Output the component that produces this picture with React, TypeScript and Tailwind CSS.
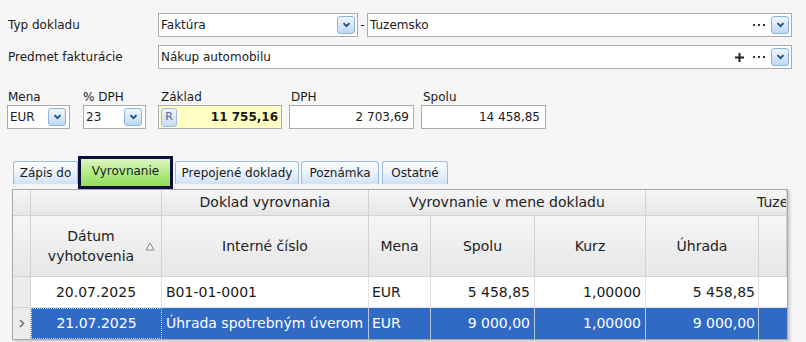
import React from "react";

const Chevron = () => (
  <svg width="9" height="6" viewBox="0 0 9 6">
    <path d="M1.5 1.2 L4.5 4.2 L7.5 1.2" fill="none" stroke="#1f4e8c" strokeWidth="1.9" />
  </svg>
);

function DropBtn() {
  return (
    <div className="w-[18px] h-[18px] shrink-0 rounded-[3px] border border-[#8db4e0] bg-gradient-to-b from-[#f2f7fd] to-[#bfd9f5] flex items-center justify-center">
      <Chevron />
    </div>
  );
}

function Dots() {
  return (
    <div className="flex items-center gap-[3px] mr-[6px]">
      <div className="w-[2px] h-[2px] bg-[#333]" />
      <div className="w-[2px] h-[2px] bg-[#333]" />
      <div className="w-[2px] h-[2px] bg-[#333]" />
    </div>
  );
}

function Plus() {
  return (
    <svg width="9" height="9" viewBox="0 0 9 9" className="mr-[9px]">
      <path d="M0 4.5 H9 M4.5 0 V9" stroke="#222" strokeWidth="2" />
    </svg>
  );
}

function Tab({ label, w }: { label: string; w: string }) {
  return (
    <div
      className={`${w} h-[23px] shrink-0 rounded-t-[3px] border border-b-0 border-[#9dbbe0] bg-gradient-to-b from-[#fbfdff] via-[#eaf2fc] to-[#cfe1f6] flex items-center justify-center text-[12px] text-[#1a1a1a]`}
    >
      {label}
    </div>
  );
}

const hdr =
  "border-r border-b border-[#d2d2d2] bg-gradient-to-b from-[#f6f6f6] to-[#e6e6e6] flex items-center justify-center text-[#222]";

export default function App() {
  return (
    <div className="w-[806px] h-[342px] overflow-hidden bg-[#f6f6f6] font-['DejaVu_Sans',sans-serif] text-[12px] text-[#1a1a1a]">
      {/* Typ dokladu */}
      <div className="flex items-center h-6 mt-[13px] pl-2 pr-[14px]">
        <div className="w-[150px] shrink-0">Typ dokladu</div>
        <div className="w-[200px] h-6 shrink-0 border border-[#ababab] bg-white flex items-center pl-[2px] pr-[2px]">
          <span className="flex-1">Faktúra</span>
          <DropBtn />
        </div>
        <span className="w-[9px] text-center">-</span>
        <div className="flex-1 h-6 border border-[#ababab] bg-white flex items-center pl-[2px] pr-[2px]">
          <span className="flex-1">Tuzemsko</span>
          <Dots />
          <DropBtn />
        </div>
      </div>

      {/* Predmet */}
      <div className="flex items-center h-6 mt-2 pl-2 pr-[14px]">
        <div className="w-[150px] shrink-0">Predmet fakturácie</div>
        <div className="flex-1 h-6 border border-[#ababab] bg-white flex items-center pl-[2px] pr-[2px]">
          <span className="flex-1">Nákup automobilu</span>
          <Plus />
          <Dots />
          <DropBtn />
        </div>
      </div>

      {/* amounts */}
      <div className="flex items-end mt-[21px] pl-[7px]">
        <div className="flex flex-col w-[63px]">
          <span className="pl-px h-[15px] leading-[15px]">Mena</span>
          <div className="h-6 border border-[#ababab] bg-white flex items-center pl-[2px] pr-[3px]">
            <span className="flex-1">EUR</span>
            <DropBtn />
          </div>
        </div>
        <div className="flex flex-col w-[63px] ml-[13px]">
          <span className="h-[15px] leading-[15px]">% DPH</span>
          <div className="h-6 border border-[#ababab] bg-white flex items-center pl-[2px] pr-[3px]">
            <span className="flex-1">23</span>
            <DropBtn />
          </div>
        </div>
        <div className="flex flex-col w-[124px] ml-[12px]">
          <span className="pl-[3px] h-[15px] leading-[15px]">Základ</span>
          <div className="h-6 border border-[#ababab] bg-[#ffffc4] flex items-center pl-[2px] pr-[3px]">
            <div className="w-4 h-[19px] rounded-[3px] border border-[#9ebce0] bg-gradient-to-b from-[#eef5fd] to-[#c8dcf4] flex items-center justify-center text-[11px] text-[#3c6aa8]">
              R
            </div>
            <span className="flex-1 text-right font-bold">11 755,16</span>
          </div>
        </div>
        <div className="flex flex-col w-[125px] ml-[7px]">
          <span className="pl-[2px] h-[15px] leading-[15px]">DPH</span>
          <div className="h-6 border border-[#ababab] bg-white flex items-center justify-end pr-[4px]">
            2 703,69
          </div>
        </div>
        <div className="flex flex-col w-[125px] ml-[7px]">
          <span className="pl-[2px] h-[15px] leading-[15px]">Spolu</span>
          <div className="h-6 border border-[#ababab] bg-white flex items-center justify-end pr-[5px]">
            14 458,85
          </div>
        </div>
      </div>

      {/* tabs */}
      <div className="flex items-center h-[33px] mt-[27px] pl-[13px]">
        <Tab label="Zápis do" w="w-[65px]" />
        <div className="w-[95px] h-[33px] shrink-0 border-[3px] border-[#0d0d3e]">
          <div className="h-full bg-gradient-to-b from-[#dff6c4] via-[#b4ec86] to-[#8edc5c] flex items-center justify-center text-[12px] text-[#1a1a1a] pb-[3px]">
            Vyrovnanie
          </div>
        </div>
        <div className="w-[2px]" />
        <Tab label="Prepojené doklady" w="w-[124px]" />
        <div className="w-[2px]" />
        <Tab label="Poznámka" w="w-[78px]" />
        <div className="w-[3px]" />
        <Tab label="Ostatné" w="w-[66px]" />
      </div>

      {/* grid */}
      <div className="ml-[12px] w-[776px] border border-[#a9a9a9] bg-white shadow-[2px_2px_3px_rgba(0,0,0,0.18)] text-[14px]">
        <div className="grid grid-cols-[18px_131px_207px_62px_104px_111px_113px_28px]">
          {/* header row 1 */}
          <div className={`${hdr} h-[26px]`} />
          <div className={`${hdr} h-[26px]`} />
          <div className={`${hdr} h-[26px]`}>Doklad vyrovnania</div>
          <div className={`${hdr} h-[26px] col-span-3`}>Vyrovnanie v mene dokladu</div>
          <div className={`${hdr} h-[26px] col-span-2 !justify-start pl-[111px] whitespace-nowrap overflow-hidden`}>
            Tuzemsko
          </div>

          {/* header row 2 */}
          <div className={`${hdr} h-[61px]`} />
          <div className={`${hdr} h-[61px] !justify-between pl-[6px] pr-[6px]`}>
            <span className="flex-1 text-center leading-[20px]">
              Dátum
              <br />
              vyhotovenia
            </span>
            <svg width="10" height="9" viewBox="0 0 10 9" className="mt-[1px]">
              <path d="M5 1 L9 8 H1 Z" fill="none" stroke="#8a8a8a" strokeWidth="1" />
            </svg>
          </div>
          <div className={`${hdr} h-[61px]`}>Interné číslo</div>
          <div className={`${hdr} h-[61px]`}>Mena</div>
          <div className={`${hdr} h-[61px]`}>Spolu</div>
          <div className={`${hdr} h-[61px]`}>Kurz</div>
          <div className={`${hdr} h-[61px]`}>Úhrada</div>
          <div className={`${hdr} h-[61px]`} />

          {/* row 1 */}
          <div className="h-[31px] border-r border-b border-[#d2d2d2] bg-[#ececec]" />
          <div className="h-[31px] border-r border-b border-[#e0e0e0] flex items-center justify-center">20.07.2025</div>
          <div className="h-[31px] border-r border-b border-[#e0e0e0] flex items-center pl-[4px]">B01-01-0001</div>
          <div className="h-[31px] border-r border-b border-[#e0e0e0] flex items-center pl-[3px]">EUR</div>
          <div className="h-[31px] border-r border-b border-[#e0e0e0] flex items-center justify-end pr-[4px]">5 458,85</div>
          <div className="h-[31px] border-r border-b border-[#e0e0e0] flex items-center justify-end pr-[4px]">1,00000</div>
          <div className="h-[31px] border-r border-b border-[#e0e0e0] flex items-center justify-end pr-[3px]">5 458,85</div>
          <div className="h-[31px] border-b border-[#e0e0e0]" />

          {/* row 2 selected */}
          <div className="h-[31px] border-r border-[#d2d2d2] bg-[#ececec] flex items-center justify-center">
            <svg width="6" height="9" viewBox="0 0 6 9">
              <path d="M1 1 L4.5 4.5 L1 8" fill="none" stroke="#707070" strokeWidth="1.6" />
            </svg>
          </div>
          <div className="h-[31px] bg-[#316ac5] border border-dotted border-[#c9d6ee] text-white flex items-center justify-center">
            21.07.2025
          </div>
          <div className="h-[31px] bg-[#316ac5] border-r border-[#b8c9e8] text-white flex items-center pl-[4px] whitespace-nowrap">
            Úhrada spotrebným úverom
          </div>
          <div className="h-[31px] bg-[#316ac5] border-r border-[#b8c9e8] text-white flex items-center pl-[3px]">EUR</div>
          <div className="h-[31px] bg-[#316ac5] border-r border-[#b8c9e8] text-white flex items-center justify-end pr-[4px]">9 000,00</div>
          <div className="h-[31px] bg-[#316ac5] border-r border-[#b8c9e8] text-white flex items-center justify-end pr-[4px]">1,00000</div>
          <div className="h-[31px] bg-[#316ac5] border-r border-[#b8c9e8] text-white flex items-center justify-end pr-[3px]">9 000,00</div>
          <div className="h-[31px] bg-[#316ac5]" />
        </div>
      </div>
    </div>
  );
}
